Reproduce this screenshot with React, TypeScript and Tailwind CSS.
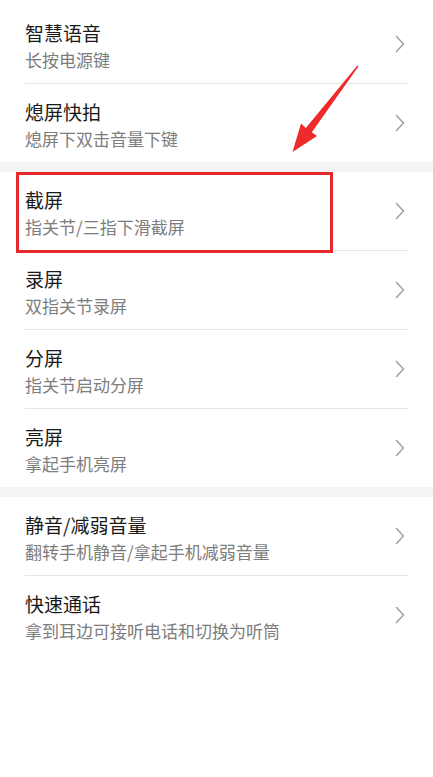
import React from "react";

type Item = { title: string; sub: string; highlight?: boolean };

const sections: Item[][] = [
  [
    { title: "智慧语音", sub: "长按电源键" },
    { title: "熄屏快拍", sub: "熄屏下双击音量下键" },
  ],
  [
    { title: "截屏", sub: "指关节/三指下滑截屏", highlight: true },
    { title: "录屏", sub: "双指关节录屏" },
    { title: "分屏", sub: "指关节启动分屏" },
    { title: "亮屏", sub: "拿起手机亮屏" },
  ],
  [
    { title: "静音/减弱音量", sub: "翻转手机静音/拿起手机减弱音量" },
    { title: "快速通话", sub: "拿到耳边可接听电话和切换为听筒" },
  ],
];

function Chevron() {
  return (
    <svg width="10" height="18" viewBox="0 0 10 18" fill="none">
      <path d="M1.5 1.5 L8.5 9 L1.5 16.5" stroke="#a3a3a3" strokeWidth="1.6" strokeLinecap="round" strokeLinejoin="round" />
    </svg>
  );
}

function Row({ item, last }: { item: Item; last: boolean }) {
  return (
    <div className="relative">
      <div className="flex h-[78px] items-start justify-between pl-[25px] pr-[28px]">
        <div className="flex flex-col gap-[3px] pt-[16px]">
          <div className="text-[19px] leading-[24px] text-[#1a1a1a]">{item.title}</div>
          <div className="text-[17px] leading-[24px] text-[#7d7d7d]">{item.sub}</div>
        </div>
        <div className="flex h-full items-center">
          <Chevron />
        </div>
      </div>
      {!last && <div className="mx-[25px] h-px bg-[#e6e6e6]" />}
      {item.highlight && (
        <div className="absolute left-[16px] top-0 h-[81px] w-[317px] border-[3px] border-[#e52a2c]" />
      )}
    </div>
  );
}

export default function App() {
  return (
    <div
      className="relative h-[777px] w-[433px] overflow-hidden bg-white"
      style={{ fontFamily: '"Noto Sans CJK SC", "Noto Sans", sans-serif' }}
    >
      <div className="h-[5px]" />
      {sections.map((sec, si) => (
        <div key={si}>
          {sec.map((it, i) => (
            <Row key={it.title} item={it} last={i === sec.length - 1} />
          ))}
          {si < sections.length - 1 && <div className="h-[10px] bg-[#f4f4f4]" />}
        </div>
      ))}
      <svg
        className="pointer-events-none absolute left-0 top-0"
        width="433"
        height="777"
        viewBox="0 0 433 777"
      >
        <polygon
          points="292.5,152 317,136 311.8,132.3 358.6,66.2 357.4,65.4 305.8,128 301,123.5"
          fill="#ee2a2a"
        />
      </svg>
    </div>
  );
}
